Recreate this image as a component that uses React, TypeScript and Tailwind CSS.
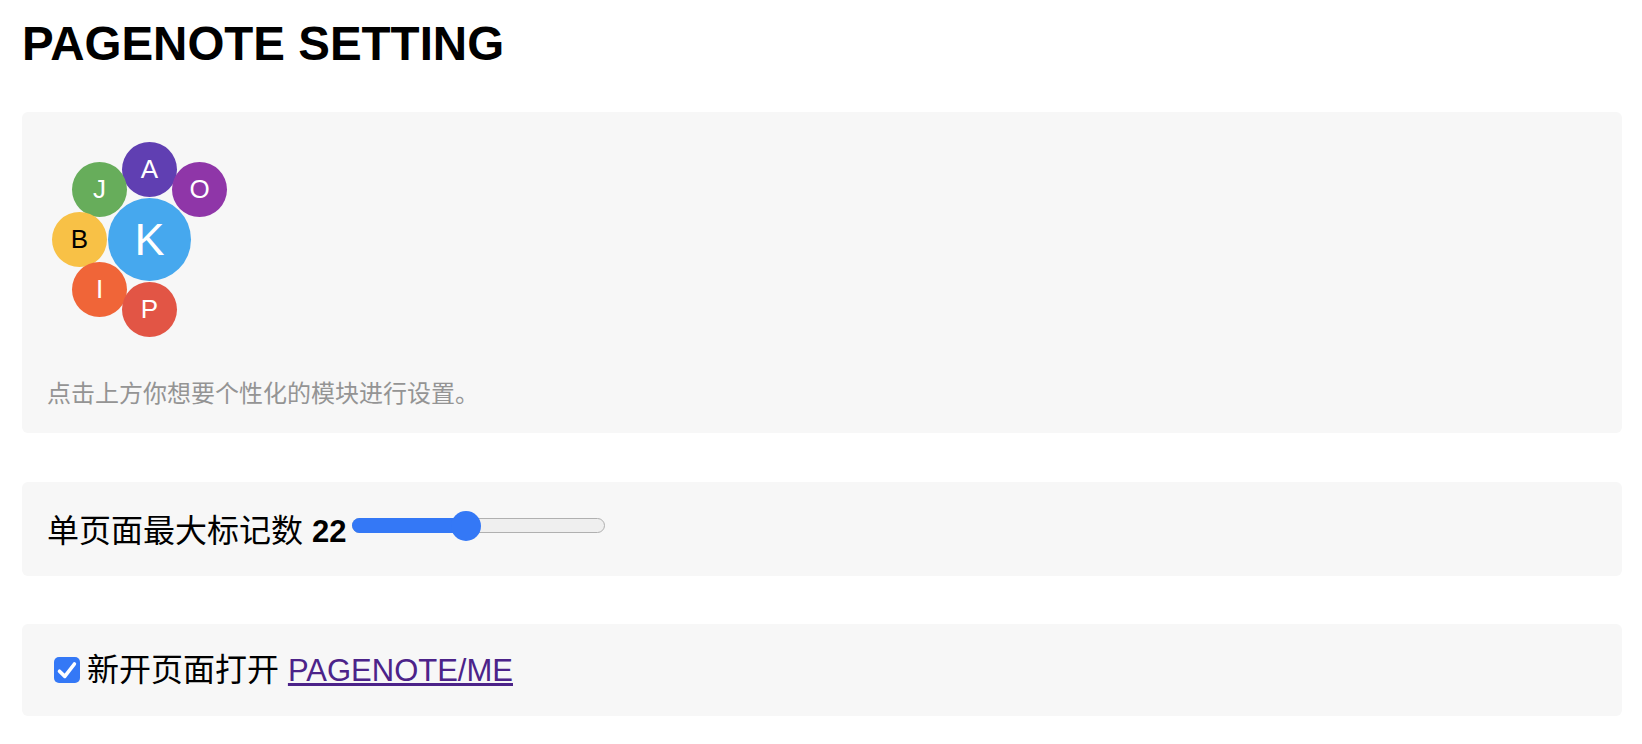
import React from "react";

type Bubble = {
  letter: string;
  color: string;
  pos: string;
  size: string;
  text: string;
};

const bubbles: Bubble[] = [
  { letter: "A", color: "bg-[#603fb2]", pos: "left-[76px] top-[6px]", size: "w-[55px] h-[55px] text-[26px]", text: "text-white" },
  { letter: "J", color: "bg-[#67ad5b]", pos: "left-[26px] top-[26px]", size: "w-[55px] h-[55px] text-[26px]", text: "text-white" },
  { letter: "O", color: "bg-[#8f36a8]", pos: "left-[126px] top-[26px]", size: "w-[55px] h-[55px] text-[26px]", text: "text-white" },
  { letter: "B", color: "bg-[#f8c146]", pos: "left-[6px] top-[76px]", size: "w-[55px] h-[55px] text-[26px]", text: "text-black" },
  { letter: "K", color: "bg-[#46a8ee]", pos: "left-[62px] top-[62px]", size: "w-[83px] h-[83px] text-[45px]", text: "text-white" },
  { letter: "I", color: "bg-[#f06538]", pos: "left-[26px] top-[126px]", size: "w-[55px] h-[55px] text-[26px]", text: "text-white" },
  { letter: "P", color: "bg-[#e25545]", pos: "left-[76px] top-[146px]", size: "w-[55px] h-[55px] text-[26px]", text: "text-white" },
];

export default function App() {
  return (
    <div className="min-h-screen bg-white pl-[22px] pr-[20px] pt-[20px] font-['Liberation_Sans','Noto_Sans_CJK_SC',sans-serif] text-black">
      <h1 className="text-[47.5px] font-bold leading-none mb-[44px]">PAGENOTE SETTING</h1>

      {/* Card 1: bubble menu */}
      <div className="rounded-[6px] bg-[#f7f7f7] pt-[24px] pl-[24px] pb-[27px]">
        <div className="relative w-[190px] h-[201px]">
          {bubbles.map((b) => (
            <div
              key={b.letter}
              className={`absolute flex items-center justify-center rounded-full leading-none ${b.color} ${b.pos} ${b.size} ${b.text}`}
            >
              {b.letter}
            </div>
          ))}
        </div>
        <div className="mt-[45px] ml-[1px] text-[24px] leading-none text-[#949494]">
          点击上方你想要个性化的模块进行设置。
        </div>
      </div>

      {/* Card 2: slider */}
      <div className="mt-[49px] rounded-[6px] bg-[#f7f7f7] pl-[25px] pt-[33px] pb-[29px]">
        <div className="flex items-start">
          <span className="text-[32px] leading-none whitespace-pre">
            单页面最大标记数 <b className="text-[31px] font-bold">22</b>
          </span>
          <div className="relative ml-[6px] -mt-[4px] h-[30px] w-[253px]">
            <div className="absolute left-0 right-0 top-[7px] h-[15px] rounded-full border border-[#b0b0b0] bg-[#efefef]" />
            <div className="absolute left-0 top-[7px] h-[15px] w-[114px] rounded-l-full bg-[#3478f6]" />
            <div className="absolute left-[99px] top-0 h-[30px] w-[30px] rounded-full bg-[#3478f6]" />
          </div>
        </div>
      </div>

      {/* Card 3: checkbox */}
      <div className="mt-[48px] rounded-[6px] bg-[#f7f7f7] pl-[32px] pt-[30px] pb-[30px]">
        <div className="flex items-center">
          <div className="flex h-[26px] w-[26px] items-center justify-center rounded-[5px] bg-[#3478f6]">
            <svg width="26" height="26" viewBox="0 0 26 26" fill="none">
              <path d="M5.5 14.2 L10.8 19.4 L20.4 7" stroke="white" strokeWidth="3.6" strokeLinecap="round" strokeLinejoin="round" />
            </svg>
          </div>
          <span className="ml-[7px] text-[32px] leading-none whitespace-pre">
            新开页面打开 <a href="#" className="text-[31px] text-[#4c2389] underline">PAGENOTE/ME</a>
          </span>
        </div>
      </div>
    </div>
  );
}
